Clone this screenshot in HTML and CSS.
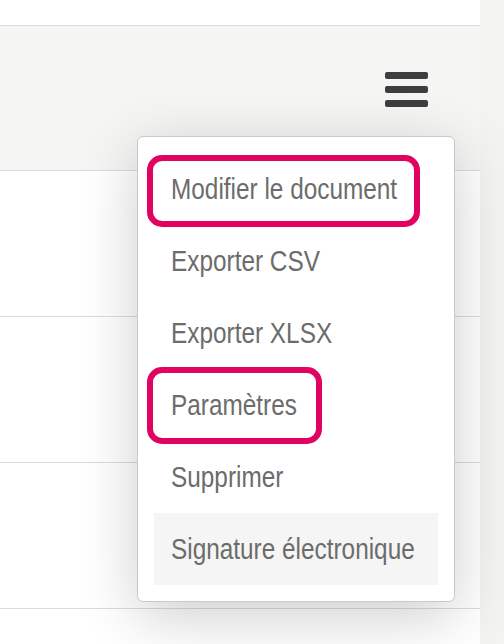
FILE: index.html
```html
<!DOCTYPE html>
<html lang="fr">
<head>
<meta charset="utf-8">
<title>Menu</title>
<link rel="stylesheet" href="styles.css">
</head>
<body>
<div class="page">
  <div class="main">
    <div class="toprow"></div>
    <div class="row header">
      <button class="burger" aria-label="Menu">
        <span class="bar"></span><span class="bar"></span><span class="bar"></span>
      </button>
      <ul class="dropdown">
        <li class="item mark mark-long"><span class="label">Modifier le document</span></li>
        <li class="item"><span class="label">Exporter CSV</span></li>
        <li class="item"><span class="label">Exporter XLSX</span></li>
        <li class="item mark mark-short"><span class="label">Paramètres</span></li>
        <li class="item"><span class="label">Supprimer</span></li>
        <li class="item active"><span class="label">Signature électronique</span></li>
      </ul>
    </div>
    <div class="row"></div>
    <div class="row"></div>
    <div class="row"></div>
    <div class="tail"></div>
  </div>
  <div class="side"></div>
</div>
</body>
</html>
```
FILE: styles.css
```css
html, body {
  margin: 0;
  padding: 0;
  height: 100%;
  overflow: hidden;
}
body {
  font-family: "Liberation Sans", Arial, sans-serif;
  background: #f3f4f2;
}
.page {
  display: grid;
  grid-template-columns: 480px 1fr;
  height: 644px;
}
.main {
  display: flex;
  flex-direction: column;
  background: #ffffff;
}
.side {
  background: #f3f4f2;
}
.toprow {
  height: 25px;
  flex: none;
  border-bottom: 1px solid #d9dce0;
  background: #ffffff;
}
.row {
  height: 145px;
  flex: none;
  border-bottom: 1px solid #d9dce0;
  background: #ffffff;
}
.tail {
  flex: 1;
  background: #ffffff;
}
.header {
  position: relative;
  background: #f5f6f4;
  display: flex;
  justify-content: flex-end;
  align-items: flex-start;
  padding: 46px 52px 0 0;
  box-sizing: border-box;
  z-index: 2;
}
.burger {
  display: flex;
  flex-direction: column;
  gap: 7px;
  padding: 0;
  margin: 0;
  border: 0;
  background: none;
  cursor: pointer;
}
.bar {
  display: block;
  width: 43px;
  height: 7px;
  border-radius: 2px;
  background: #3e3e3e;
}
.dropdown {
  position: absolute;
  left: 137px;
  top: 110px;
  width: 318px;
  box-sizing: border-box;
  margin: 0;
  padding: 16px;
  list-style: none;
  background: #ffffff;
  border: 1px solid #c9c9c9;
  border-radius: 6px;
  box-shadow: 0 14px 60px rgba(0, 0, 0, 0.2);
}
.item {
  position: relative;
  height: 72px;
  display: flex;
  align-items: center;
  padding-left: 17px;
  font-size: 29px;
  color: #6c6c6c;
}
.item.active {
  background: #f5f5f5;
}
.label {
  display: inline-block;
  white-space: nowrap;
  transform: scaleX(0.84);
  transform-origin: left center;
}
.mark::after {
  content: "";
  position: absolute;
  left: -7px;
  box-sizing: border-box;
  border: 6px solid #e0035f;
  border-radius: 15px;
}
.mark-long::after {
  top: 2px;
  height: 72px;
  width: 273px;
}
.mark-short::after {
  top: -2px;
  height: 77px;
  width: 175px;
}
```
